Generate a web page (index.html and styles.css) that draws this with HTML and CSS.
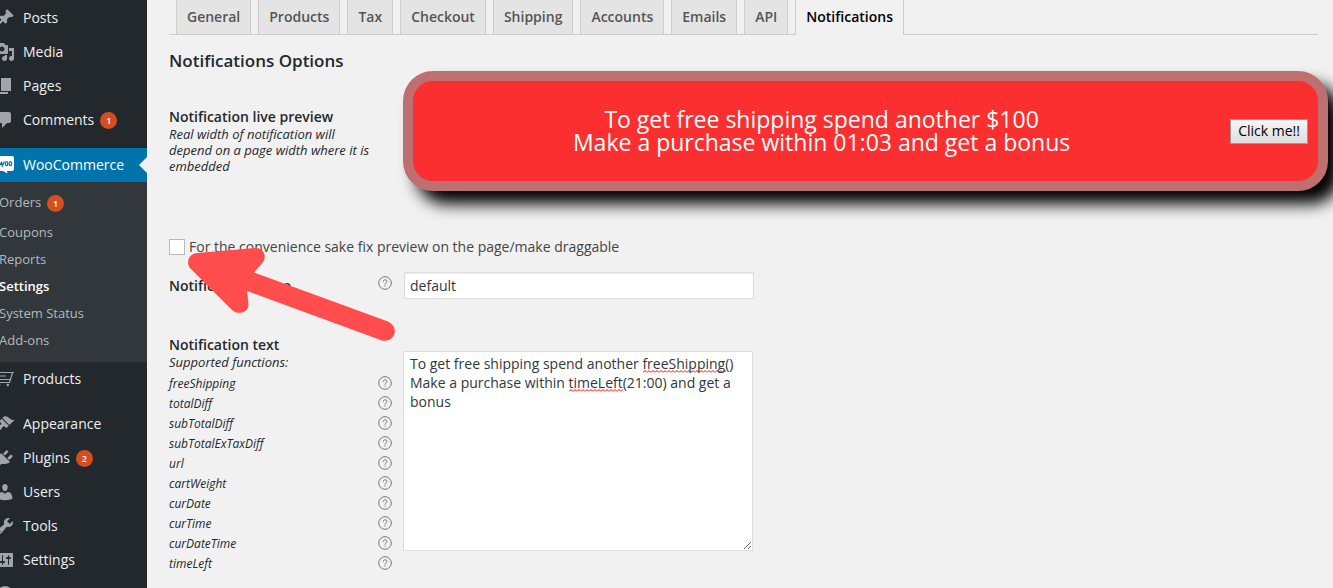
FILE: index.html
```html
<!DOCTYPE html>
<html lang="en">
<head>
<meta charset="utf-8">
<title>WooCommerce Settings – Notifications</title>
<link rel="stylesheet" href="styles.css">
</head>
<body>
<div class="shell">
  <nav class="sidebar" aria-label="Admin menu">
    <ul class="menu">
      <li><a class="menu-link" href="#"><svg class="icon" viewBox="0 0 20 20"><path d="M10.44 3.02l1.82-1.82 6.36 6.35-1.83 1.82c-1.05-.68-2.48-.57-3.41.36l-.75.75c-.92.93-1.04 2.35-.35 3.41l-1.83 1.82-2.41-2.41-2.8 2.79c-.42.42-3.38 2.71-3.8 2.29s1.86-3.39 2.28-3.81l2.79-2.79L4.1 9.36l1.83-1.82c1.05.69 2.48.57 3.4-.36l.75-.75c.93-.92 1.05-2.35.36-3.41z"/></svg>Posts</a></li>
      <li><a class="menu-link" href="#"><svg class="icon" viewBox="0 0 20 20"><path fill-rule="evenodd" d="M13 11V4c0-.55-.45-1-1-1h-1.67L9 1H5L3.67 3H2c-.55 0-1 .45-1 1v7c0 .55.45 1 1 1h10c.55 0 1-.45 1-1zM7 4.5c1.38 0 2.5 1.12 2.5 2.5S8.38 9.5 7 9.5 4.5 8.38 4.5 7 5.62 4.5 7 4.5zM14 6h5v10.5c0 1.38-1.12 2.5-2.5 2.5S14 17.88 14 16.5s1.12-2.5 2.5-2.5c.17 0 .34.02.5.05V9h-3V6zm-4 8.05V13h2v3.5c0 1.38-1.12 2.5-2.5 2.5S7 17.88 7 16.5 8.12 14 9.5 14c.17 0 .34.02.5.05z"/></svg>Media</a></li>
      <li><a class="menu-link" href="#"><svg class="icon" viewBox="0 0 20 20"><path d="M6 15V2h10v13H6zm-1 1h8v2H3V5h2v11z"/></svg>Pages</a></li>
      <li><a class="menu-link" href="#"><svg class="icon" viewBox="0 0 20 20"><path d="M5 2h9c1.1 0 2 .9 2 2v7c0 1.1-.9 2-2 2h-2l-5 5v-5H5c-1.1 0-2-.9-2-2V4c0-1.1.9-2 2-2z"/></svg>Comments<span class="badge">1</span></a></li>
    </ul>
    <ul class="menu">
      <li>
        <a class="menu-link menu-current" href="#"><svg class="icon" viewBox="0 0 20 20"><path d="M2 1h15q2 0 2 2v11q0 2-2 2h-5l.500 2.500L8 16H2q-2 0-2-2V3q0-2 2-2z"/><path class="woo-mark" d="M3.500 6.500l.3 4.500 2.700-3.500.8 3.500L9.300 6.500"/><ellipse class="woo-mark" cx="11.600" cy="8.700" rx="1.200" ry="2"/><ellipse class="woo-mark" cx="15.400" cy="8.700" rx="1.200" ry="2"/></svg>WooCommerce</a>
        <ul class="submenu">
          <li><a href="#">Orders<span class="badge">1</span></a></li>
          <li><a href="#">Coupons</a></li>
          <li><a href="#">Reports</a></li>
          <li><a class="submenu-current" href="#">Settings</a></li>
          <li><a href="#">System Status</a></li>
          <li><a href="#">Add-ons</a></li>
        </ul>
      </li>
      <li><a class="menu-link" href="#"><svg class="icon" viewBox="0 0 20 20"><path class="line" d="M18.800 3.500H2M17.500 3.500L15.500 10.500H2M2 7h9M15.500 10.500L14.500 13.500H2"/><circle cx="12.800" cy="16" r="1.300"/><circle cx="4" cy="16" r="1.300"/></svg>Products</a></li>
    </ul>
    <ul class="menu">
      <li><a class="menu-link" href="#"><svg class="icon" viewBox="0 0 20 20"><path d="M14.480 11.060L7.410 3.990l1.500-1.500c.5-.56 2.300-.47 3.510.32 1.210.8 1.430 1.280 2.910 2.100 1.180.64 2.450 1.260 4.450.85zm-.71.71L6.700 4.700 4.930 6.470c-.39.39-.39 1.020 0 1.410l1.060 1.060c.39.39.39 1.030 0 1.420-.6.6-1.430 1.110-2.210 1.690-.35.26-.7.53-1.010.84C1.430 14.230.4 16.080 1.400 17.070c.99 1 2.840-.03 4.180-1.360.31-.31.58-.66.85-1.020.57-.78 1.080-1.610 1.690-2.210.39-.39 1.020-.39 1.410 0l1.060 1.060c.39.39 1.020.39 1.410 0z"/></svg>Appearance</a></li>
      <li><a class="menu-link" href="#"><svg class="icon" viewBox="0 0 20 20"><path d="M13.110 4.360L9.870 7.600 8 5.730l3.240-3.240c.35-.34 1.050-.2 1.560.32.52.51.66 1.210.31 1.550zm-8 1.770l.91-1.120 9.010 9.010-1.190.84c-.71.71-2.630 1.160-3.820 1.160H6.140L4.900 17.260c-.59.59-1.540.59-2.120 0-.59-.58-.59-1.530 0-2.120l1.240-1.240v-3.880c0-1.130.4-3.190 1.090-3.890zm7.260 3.970l3.240-3.240c.34-.35 1.040-.21 1.550.31.52.51.66 1.210.31 1.550l-3.240 3.250z"/></svg>Plugins<span class="badge">2</span></a></li>
      <li><a class="menu-link" href="#"><svg class="icon" viewBox="0 0 20 20"><path d="M10 9.250c-2.270 0-2.730-3.440-2.730-3.440C7 4.020 7.820 2 9.970 2c2.160 0 2.980 2.020 2.710 3.810 0 0-.41 3.440-2.680 3.440zm0 2.570L12.720 10c2.390 0 4.520 2.330 4.520 4.530v2.490s-3.650 1.130-7.240 1.130c-3.650 0-7.240-1.130-7.240-1.130v-2.490c0-2.250 1.940-4.480 4.470-4.480z"/></svg>Users</a></li>
      <li><a class="menu-link" href="#"><svg class="icon" viewBox="0 0 20 20"><path fill-rule="evenodd" d="M16.680 9.770c-1.340 1.340-3.300 1.670-4.950.99l-5.410 6.520c-.99.99-2.590.99-3.580 0s-.99-2.590 0-3.570l6.520-5.420c-.68-1.650-.35-3.610.99-4.950 1.280-1.280 3.120-1.620 4.720-1.060l-2.890 2.890 2.820 2.820 2.860-2.870c.53 1.580.18 3.390-1.080 4.650zM3.810 16.210c.4.39 1.040.39 1.430 0 .4-.4.4-1.040 0-1.430-.39-.4-1.030-.4-1.430 0-.39.39-.39 1.030 0 1.430z"/></svg>Tools</a></li>
      <li><a class="menu-link" href="#"><svg class="icon" viewBox="0 0 20 20"><path fill-rule="evenodd" d="M18 16V4c0-.55-.45-1-1-1H3c-.55 0-1 .45-1 1v12c0 .55.45 1 1 1h14c.55 0 1-.45 1-1zM8 11h1c.55 0 1 .45 1 1s-.45 1-1 1H8v1.500c0 .28-.22.5-.5.5s-.5-.22-.5-.5V13H6c-.55 0-1-.45-1-1s.45-1 1-1h1V5.500c0-.28.22-.5.5-.5s.5.22.5.5V11zm5-2h-1c-.55 0-1-.45-1-1s.45-1 1-1h1V5.500c0-.28.22-.5.5-.5s.5.22.5.5V7h1c.55 0 1 .45 1 1s-.45 1-1 1h-1v5.500c0 .28-.22.5-.5.5s-.5-.22-.5-.5V9z"/></svg>Settings</a></li>
      <li><a class="menu-link" href="#" aria-label="Collapse"><svg class="icon" viewBox="0 0 20 20"><circle cx="10" cy="10" r="8"/></svg></a></li>
    </ul>
  </nav>

  <main class="content">
    <nav class="tabs" aria-label="Settings sections">
      <a class="tab" href="#">General</a>
      <a class="tab" href="#">Products</a>
      <a class="tab" href="#">Tax</a>
      <a class="tab" href="#">Checkout</a>
      <a class="tab" href="#">Shipping</a>
      <a class="tab" href="#">Accounts</a>
      <a class="tab" href="#">Emails</a>
      <a class="tab" href="#">API</a>
      <a class="tab tab-active" href="#" aria-current="page">Notifications</a>
    </nav>

    <h1 class="heading">Notifications Options</h1>

    <form class="form">
      <section class="row row-preview">
        <div class="preview-label">
          <h2 class="label">Notification live preview</h2>
          <p class="hint">Real width of notification will depend on a page width where it is embedded</p>
        </div>
        <div class="banner">
          <p class="banner-text">To get free shipping spend another $100<br>Make a purchase within 01:03 and get a bonus</p>
          <button class="banner-button" type="button">Click me!!</button>
        </div>
      </section>

      <label class="check"><input class="check-box" type="checkbox">For the convenience sake fix preview on the page/make draggable</label>

      <div class="row row-name">
        <div class="term"><label class="label" for="name">Notification name</label><svg class="help"><use href="#help"/></svg></div>
        <input class="field field-name" id="name" type="text" value="default">
      </div>

      <div class="row row-text">
        <div>
          <label class="label" for="text">Notification text</label>
          <p class="hint">Supported functions:</p>
          <ul class="functions">
            <li>freeShipping<svg class="help"><use href="#help"/></svg></li>
            <li>totalDiff<svg class="help"><use href="#help"/></svg></li>
            <li>subTotalDiff<svg class="help"><use href="#help"/></svg></li>
            <li>subTotalExTaxDiff<svg class="help"><use href="#help"/></svg></li>
            <li>url<svg class="help"><use href="#help"/></svg></li>
            <li>cartWeight<svg class="help"><use href="#help"/></svg></li>
            <li>curDate<svg class="help"><use href="#help"/></svg></li>
            <li>curTime<svg class="help"><use href="#help"/></svg></li>
            <li>curDateTime<svg class="help"><use href="#help"/></svg></li>
            <li>timeLeft<svg class="help"><use href="#help"/></svg></li>
          </ul>
        </div>
        <textarea class="field field-text" id="text" spellcheck="false">To get free shipping spend another freeShipping()
Make a purchase within timeLeft(21:00) and get a bonus</textarea>
      </div>
    </form>

    <svg class="arrow" viewBox="188 247 210 95" aria-hidden="true"><path d="M197 253L255 248C264 247 267 257 263 262L254 272.500L388 321.500C400 327 395 343 382 340.500L247 291L248.500 304C249 313 237 316 231 309L190 268C186 263 188 254 197 253z"/></svg>
  </main>
</div>

<svg class="defs" aria-hidden="true">
  <symbol id="help" viewBox="0 0 14 14"><circle cx="7" cy="7" r="6.300"/><path d="M5.200 5.700C5.200 3.200 8.900 3.300 8.900 5.500C8.900 6.900 7 6.900 7 8.500M7 9.500V10.600"/></symbol>
</svg>
</body>
</html>
```
FILE: styles.css
```css
* {
  box-sizing: border-box;
}

body {
  margin: 0;
  background: #f1f1f1;
  color: #444;
  font: 14px/20px "Open Sans", sans-serif;
  overflow: hidden;
}

h1, h2, p, ul {
  margin: 0;
  padding: 0;
}

ul {
  list-style: none;
}

a {
  color: inherit;
  text-decoration: none;
}

.defs {
  display: none;
}

.shell {
  display: flex;
  height: 100vh;
}

/* Sidebar */

.sidebar {
  flex: 0 0 147px;
  padding-top: 1px;
  overflow: hidden;
  background: #23282d;
  color: #eee;
}

.menu {
  margin-bottom: 11px;
}

.menu-link {
  position: relative;
  display: flex;
  align-items: center;
  height: 34px;
  white-space: nowrap;
}

.icon {
  flex: none;
  width: 20px;
  height: 20px;
  margin: 0 8px 0 -5px;
  fill: #a0a5aa;
}

.icon .line {
  fill: none;
  stroke: #a0a5aa;
  stroke-width: 1.2;
}

.menu-current {
  background: #0073aa;
  color: #fff;
}

.menu-current .icon {
  fill: #fff;
}

.icon .woo-mark {
  fill: none;
  stroke: #0073aa;
  stroke-width: 1.3;
}

.menu-current::after {
  content: "";
  position: absolute;
  right: 0;
  border: 8px solid transparent;
  border-left-width: 0;
  border-right-color: #f1f1f1;
}

.badge {
  width: 17px;
  height: 17px;
  margin-left: 6px;
  border-radius: 50%;
  background: #d54e21;
  color: #fff;
  font-size: 9px;
  font-weight: 600;
  line-height: 17px;
  text-align: center;
}

.submenu {
  padding: 6px 0 9px;
  background: #32373c;
  color: #b4b9be;
  font-size: 13px;
}

.submenu a {
  display: flex;
  align-items: center;
  height: 27px;
  margin-left: -1px;
}

.submenu li:first-child {
  padding-bottom: 3px;
}

.submenu .badge {
  margin-top: 4px;
}

.submenu .submenu-current {
  color: #fff;
  font-weight: 600;
}

/* Content */

.content {
  position: relative;
  flex: 1;
  min-width: 0;
  padding: 0 15px 0 22px;
}

.tabs {
  display: flex;
  gap: 7px;
  padding-left: 7px;
  border-bottom: 1px solid #ccc;
}

.tab {
  height: 34px;
  padding: 5px 10px;
  border: 1px solid #ccc;
  border-width: 0 1px;
  background: #e4e4e4;
  color: #555;
  font-weight: 600;
  line-height: 24px;
}

.tab-active {
  height: 35px;
  margin-bottom: -1px;
  background: #f1f1f1;
  color: #000;
}

.heading {
  padding: 15px 0 10px;
  color: #23282d;
  font-size: 17px;
  font-weight: 600;
  line-height: 22px;
}

.row {
  display: grid;
  grid-template-columns: 234px minmax(0, 1fr);
  align-items: start;
}

.row-preview {
  margin-top: -11px;
}

.label {
  display: block;
  color: #23282d;
  font-size: 14px;
  font-weight: 600;
  line-height: 18px;
}

.hint {
  width: 204px;
  color: #23282d;
  font-size: 13px;
  font-style: italic;
  line-height: 16px;
}

.preview-label {
  padding-top: 37px;
}

.banner {
  display: flex;
  align-items: center;
  min-height: 120px;
  margin-right: -10px;
  padding-right: 10px;
  border: 10px solid #c06f70;
  border-radius: 30px;
  background: #fb2f2f;
  box-shadow: 13px 13px 16px #000;
}

.banner-text {
  flex: 1;
  color: #fff;
  font-size: 23px;
  line-height: 23px;
  text-align: center;
}

.banner-button {
  height: 25px;
  padding: 0 7px;
  border: 1px solid #999;
  background: linear-gradient(#f6f6f6, #dedede);
  color: #000;
  font: 14px/20px "Open Sans", sans-serif;
}

.check {
  display: flex;
  align-items: center;
  gap: 4px;
  margin-top: 46px;
}

.check-box {
  appearance: none;
  width: 16px;
  height: 16px;
  margin: 0;
  border: 1px solid #b4b9be;
  background: #fff;
}

.row-name {
  margin-top: 15px;
}

.term {
  display: flex;
  justify-content: space-between;
  padding: 4px 11px 0 0;
}

.term .label {
  padding-top: 1px;
}

.help {
  flex: none;
  width: 14px;
  height: 14px;
  fill: none;
  stroke: #777;
  stroke-width: 1;
}

.field {
  width: 350px;
  max-width: 100%;
  border: 1px solid #ddd;
  background: #fff;
  color: #32373c;
  font: 14px/19px "Open Sans", sans-serif;
}

.field-name {
  height: 27px;
  margin-left: 1px;
  padding: 3px 5px;
  box-shadow: inset 0 1px 2px #eee;
}

.row-text {
  margin-top: 37px;
}

/* Wavy spelling marks sit under the two function names */
.field-text {
  height: 200px;
  margin-top: 15px;
  padding: 2px 6px;
  background:
    url("data:image/svg+xml,%3Csvg xmlns='http://www.w3.org/2000/svg' width='83' height='3'%3E%3Cpattern id='w' width='4' height='3' patternUnits='userSpaceOnUse'%3E%3Cpath d='M0 2.500L2 .5L4 2.500' fill='none' stroke='red'/%3E%3C/pattern%3E%3Crect width='83' height='3' fill='url(%23w)'/%3E%3C/svg%3E") 239px 18px no-repeat,
    url("data:image/svg+xml,%3Csvg xmlns='http://www.w3.org/2000/svg' width='54' height='3'%3E%3Cpattern id='w' width='4' height='3' patternUnits='userSpaceOnUse'%3E%3Cpath d='M0 2.500L2 .5L4 2.500' fill='none' stroke='red'/%3E%3C/pattern%3E%3Crect width='54' height='3' fill='url(%23w)'/%3E%3C/svg%3E") 165px 37px no-repeat,
    #fff;
  resize: both;
}

.functions {
  padding: 4px 11px 0 0;
  color: #23282d;
  font-size: 12px;
  font-style: italic;
}

.functions li {
  display: flex;
  align-items: center;
  justify-content: space-between;
  height: 20px;
}

.functions .help {
  margin-bottom: 2px;
}

/* Callout pointing at the checkbox */
.arrow {
  position: absolute;
  top: 247px;
  left: 41px;
  width: 210px;
  height: 95px;
  fill: #ff4d4d;
}
```
